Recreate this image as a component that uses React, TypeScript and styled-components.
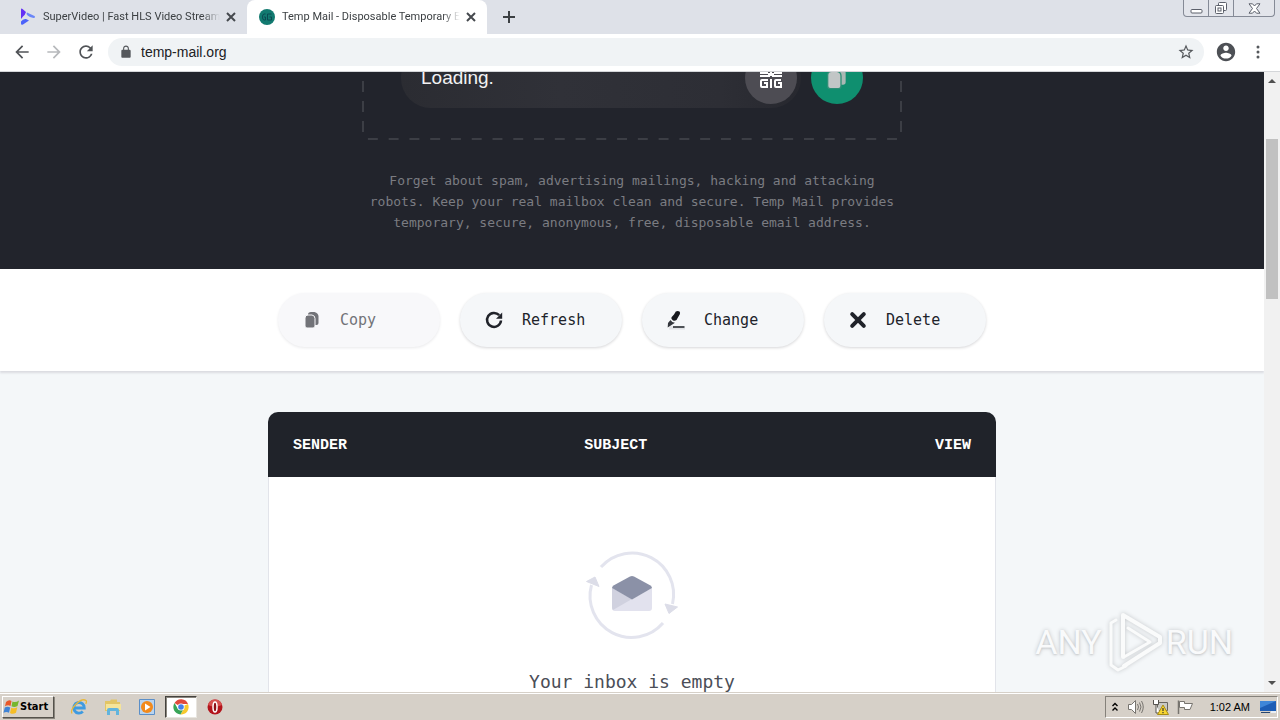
import React from "react";
import styled, { createGlobalStyle, css } from "styled-components";

const sans = `"Liberation Sans", Arial, sans-serif`;
const mono = `"DejaVu Sans Mono", "Liberation Mono", monospace`;
const headMono = `"Liberation Mono", "Courier New", monospace`;
const ui = `"DejaVu Sans Condensed", "DejaVu Sans", Tahoma, sans-serif`;

const GlobalStyle = createGlobalStyle`
  * { box-sizing: border-box; }
  body { margin: 0; font-family: ${sans}; color: #20232a; overflow: hidden; }
  button, input { font: inherit; color: inherit; border: 0; padding: 0; margin: 0; background: none; }
  svg { display: block; flex: none; }
`;

const Desktop = styled.div`
  height: 100vh;
  display: flex;
  flex-direction: column;
  overflow: hidden;
`;

/* ---------- browser chrome ---------- */

const TabStrip = styled.header`
  display: flex;
  align-items: center;
  height: 34px;
  flex: none;
  background: #dee1e8;
`;

const Tab = styled.div<{ $active?: boolean }>`
  display: flex;
  align-items: center;
  width: ${(p) => (p.$active ? 240 : 247)}px;
  height: 34px;
  padding: 0 10px 0 ${(p) => (p.$active ? 12 : 20)}px;
  border-radius: 8px 8px 0 0;
  background: ${(p) => (p.$active ? "#fff" : "transparent")};
`;

const TabTitle = styled.button`
  flex: 1;
  min-width: 0;
  margin: 0 5px 0 7px;
  overflow: hidden;
  white-space: nowrap;
  text-align: left;
  font: 11px/16px Roboto, ${sans};
  color: #3c4043;
  mask-image: linear-gradient(90deg, #000 90%, transparent);
`;

const IconButton = styled.button<{ $w?: number }>`
  display: flex;
  align-items: center;
  justify-content: center;
  flex: none;
  width: ${(p) => p.$w ?? 32}px;
  height: 28px;
`;

const CaptionButtons = styled.div`
  display: flex;
  align-self: flex-start;
  margin: 0 5px 0 auto;
  height: 17px;
  border: 1px solid #858a96;
  border-top: 0;
  border-radius: 0 0 4px 4px;
  background: #e3e5eb;
`;

const CaptionButton = styled.button<{ $w: number }>`
  display: flex;
  align-items: center;
  justify-content: center;
  width: ${(p) => p.$w}px;
  & + & { border-left: 1px solid #858a96; }
`;

const Toolbar = styled.nav`
  display: flex;
  align-items: center;
  height: 38px;
  flex: none;
  padding: 0 6px 2px;
  background: #fff;
  border-bottom: 1px solid #d4d6d9;
`;

const Omnibox = styled.div`
  display: flex;
  align-items: center;
  flex: 1;
  height: 28px;
  margin: 0 6px;
  padding: 0 2px 0 11px;
  border-radius: 14px;
  background: #f0f3f5;
`;

const UrlInput = styled.input`
  flex: 1;
  min-width: 0;
  margin-left: 8px;
  font: 14px/20px ${sans};
  color: #202124;
  outline: 0;
`;

/* ---------- page ---------- */

const View = styled.div`
  flex: 1;
  min-height: 0;
  display: flex;
  overflow: hidden;
`;

const Page = styled.main`
  flex: 1;
  min-width: 0;
  height: 100%;
  overflow: hidden;
  background: #f4f7f9;
`;

const Scrolled = styled.div`
  margin-top: -60px;
`;

const Hero = styled.section`
  display: flex;
  flex-direction: column;
  align-items: center;
  gap: 30px;
  padding: 6px 20px 36px;
  background: #22242c;
`;

const dash = "#3c3e45";
const MailFrame = styled.div`
  display: flex;
  align-items: center;
  gap: 10px;
  width: 100%;
  max-width: 540px;
  padding: 30px 39px 32px;
  background:
    linear-gradient(90deg, transparent 6px, ${dash} 6px 16px, transparent 16px) left bottom / 21px 2px round no-repeat,
    linear-gradient(transparent 1px, ${dash} 1px 12px, transparent 12px) left bottom / 2px 20px repeat-y,
    linear-gradient(transparent 1px, ${dash} 1px 12px, transparent 12px) right bottom / 2px 20px repeat-y;
`;

const MailPill = styled.div`
  display: flex;
  align-items: center;
  flex: 1;
  min-width: 0;
  height: 60px;
  padding: 4px 4px 4px 20px;
  border-radius: 30px;
  background: linear-gradient(90deg, #2b2c32, #303138 40%, #2d2e35 80%, #27282f);
`;

const MailInput = styled.input`
  flex: 1;
  min-width: 0;
  font: 19px/24px ${sans};
  color: #f2f2f3;
  outline: 0;
`;

const RoundButton = styled.button<{ $color: string }>`
  display: flex;
  align-items: center;
  justify-content: center;
  flex: none;
  width: 52px;
  height: 52px;
  border-radius: 50%;
  background: ${(p) => p.$color};
`;

const Intro = styled.p`
  max-width: 540px;
  margin: 0;
  text-align: center;
  font: 13px/21px ${mono};
  color: #7b7c82;
`;

const Actions = styled.section`
  display: flex;
  justify-content: center;
  gap: 20px;
  padding: 24px 20px;
  background: #fff;
  box-shadow: 0 2px 2px #dadbe0;
`;

const ActionButton = styled.button`
  display: flex;
  align-items: center;
  gap: 18px;
  width: 162px;
  height: 54px;
  padding: 0 24px;
  border-radius: 27px;
  background: #f5f7f9;
  box-shadow: 0 1px 3px #d6d6d8;
  font: 15px/20px ${mono};
  color: #20232a;
  &:disabled {
    background: #f8f8fa;
    box-shadow: 0 1px 3px #e9e9eb;
    color: #727378;
  }
`;

const Inbox = styled.section`
  max-width: 728px;
  margin: 41px auto 0;
  border-radius: 10px 10px 0 0;
  overflow: hidden;
`;

const InboxTable = styled.table`
  width: 100%;
  table-layout: fixed;
  border-collapse: separate;
  border-spacing: 0;
`;

const HeadCell = styled.th<{ $w: string; $end?: boolean }>`
  width: ${(p) => p.$w};
  height: 65px;
  padding: 2px 25px 0;
  text-align: ${(p) => (p.$end ? "right" : "left")};
  background: #20232a;
  color: #fff;
  font: bold 15px/20px ${headMono};
`;

const EmptyCell = styled.td`
  padding: 70px 20px 100px;
  background: #fff;
  border: 1px solid #e2e4ea;
  border-top: 0;
  text-align: center;
  svg { margin: 0 auto 27px; }
`;

const EmptyTitle = styled.h3`
  margin: 0;
  font: 18px/24px ${mono};
  color: #4b4e57;
`;

/* ---------- scrollbar ---------- */

const ScrollBar = styled.div`
  display: flex;
  flex-direction: column;
  align-items: center;
  width: 16px;
  flex: none;
  background: #f1f1f1;
`;

const ScrollTrack = styled.div`
  flex: 1;
  width: 12px;
  display: flex;
  flex-direction: column;
`;

const ScrollGap = styled.div<{ $grow: number }>`
  flex: ${(p) => p.$grow};
`;

const ScrollThumb = styled.div`
  flex: 160;
  background: #c1c1c1;
`;

/* ---------- watermark ---------- */

const Watermark = styled.div`
  position: absolute;
  right: 47px;
  bottom: 46px;
  display: flex;
  align-items: center;
  gap: 2px;
  font: 34px/60px Roboto, ${sans};
  color: #f9fafb;
  text-shadow: 0 0 4px #c3c6c9, 0 1px 2px #cdcfd1;
  pointer-events: none;
  svg { filter: drop-shadow(0 0 2px #c3c6c9); }
`;

/* ---------- taskbar ---------- */

const Taskbar = styled.footer`
  display: flex;
  align-items: center;
  height: 28px;
  flex: none;
  padding: 1px 2px 0;
  background: #d6d0c8;
  border-top: 1px solid #d6d0c8;
  box-shadow: inset 0 1px #fff;
  font: 11px/16px ${ui};
  color: #000;
`;

const bevel = css`
  border: 1px solid;
  border-color: #fff #55524c #55524c #fff;
  box-shadow: 1px 1px #8a867e;
`;

const StartButton = styled.button`
  display: flex;
  align-items: center;
  width: 52px;
  height: 22px;
  margin-right: 9px;
  font: bold 11px/16px ${ui};
  ${bevel}
`;

const TaskButton = styled.button<{ $active?: boolean }>`
  display: flex;
  align-items: center;
  justify-content: center;
  width: 32px;
  height: 22px;
  margin-right: 2px;
  ${(p) =>
    p.$active &&
    css`
      background: #fff;
      border: 1px solid;
      border-color: #44423e #e8e5df #e8e5df #44423e;
      box-shadow: inset 1px 1px #8a867e;
    `}
`;

const Tray = styled.div`
  display: flex;
  align-items: center;
  gap: 8px;
  height: 22px;
  margin-left: auto;
  padding: 0 1px 0 5px;
  border: 1px solid;
  border-color: #85817a #fff #fff #85817a;
`;

const Clock = styled.time`
  margin: 0 2px 0 8px;
  font: 11px/16px ${sans};
  white-space: nowrap;
`;

/* ---------- drawings ---------- */

const CloseX = () => (
  <svg width="10" height="10" viewBox="0 0 10 10" stroke="#45494e" strokeWidth="2">
    <path d="M1 1l8 8M9 1l-8 8" />
  </svg>
);

const SuperVideoLogo = () => (
  <svg width="16" height="18" viewBox="0 0 16 18">
    <path d="M1 1.5Q1 0 2.500 1L6 4Q5 7 3 8.500L1 11Z" fill="#6430f5" />
    <path d="M7 4.500L14.500 8Q16 9.500 13.500 10L10 9Q7.500 8 6.500 6Z" fill="#6a86f8" />
    <path d="M1 13.500Q3 10.500 6 11L9 12.500L3 16.500Q1 17.500 1 15.500Z" fill="#4c63fa" />
  </svg>
);

const TempMailLogo = () => (
  <svg width="16" height="16" viewBox="0 0 16 16">
    <circle cx="8" cy="8" r="8" fill="#127a70" />
    <path d="M6.500 5H5Q3.500 5 3.500 8T5 11h1.500V8H5M8.500 5v6h4V8h-2M8.500 5h4" fill="none" stroke="#0b4a52" />
  </svg>
);

const Arrow = ({ back }: { back?: boolean }) => (
  <svg width="20" height="20" viewBox="0 0 24 24" fill={back ? "#505357" : "#b7b9bc"}>
    <path d={back ? "M20 11H7.830l5.590-5.590L12 4l-8 8 8 8 1.410-1.410L7.830 13H20v-2z" : "M12 4l-1.410 1.410L16.170 11H4v2h12.170l-5.580 5.590L12 20l8-8z"} />
  </svg>
);

const ReloadIcon = () => (
  <svg width="20" height="20" viewBox="0 0 24 24" fill="#505357">
    <path d="M17.650 6.350A7.958 7.958 0 0 0 12 4c-4.420 0-7.990 3.580-7.990 8s3.570 8 7.990 8c3.730 0 6.840-2.550 7.730-6h-2.080A5.990 5.990 0 0 1 12 18c-3.310 0-6-2.690-6-6s2.690-6 6-6c1.660 0 3.140.690 4.220 1.780L13 11h7V4l-2.350 2.350z" />
  </svg>
);

const LockIcon = () => (
  <svg width="14" height="14" viewBox="0 0 24 24" fill="#55585c">
    <path d="M18 8h-1V6c0-2.760-2.240-5-5-5S7 3.240 7 6v2H6c-1.100 0-2 .9-2 2v10c0 1.100.9 2 2 2h12c1.100 0 2-.9 2-2V10c0-1.100-.9-2-2-2zM15.100 8H8.900V6c0-1.710 1.390-3.100 3.100-3.100s3.100 1.390 3.100 3.100v2z" />
  </svg>
);

const StarIcon = () => (
  <svg width="18" height="18" viewBox="0 0 24 24" fill="#55585c">
    <path d="M22 9.240l-7.190-.620L12 2 9.190 8.630 2 9.240l5.460 4.730L5.820 21 12 17.270 18.180 21l-1.630-7.030L22 9.240zM12 15.400l-3.760 2.270 1-4.280-3.320-2.880 4.380-.380L12 6.100l1.710 4.040 4.380.380-3.320 2.880 1 4.280L12 15.400z" />
  </svg>
);

const ProfileIcon = () => (
  <svg width="22" height="22" viewBox="0 0 24 24" fill="#4d5055">
    <path d="M12 2C6.480 2 2 6.480 2 12s4.480 10 10 10 10-4.480 10-10S17.520 2 12 2zm0 3c1.660 0 3 1.340 3 3s-1.340 3-3 3-3-1.340-3-3 1.340-3 3-3zm0 14.200c-2.500 0-4.710-1.280-6-3.220.030-1.990 4-3.080 6-3.080 1.990 0 5.970 1.090 6 3.080-1.290 1.940-3.500 3.220-6 3.220z" />
  </svg>
);

const MenuDots = () => (
  <svg width="4" height="14" viewBox="0 0 4 14" fill="#55585c">
    <circle cx="2" cy="2" r="1.500" />
    <circle cx="2" cy="7" r="1.500" />
    <circle cx="2" cy="12" r="1.500" />
  </svg>
);

const QrIcon = () => (
  <svg width="24" height="24" viewBox="0 0 24 24" fill="none" stroke="#fff" strokeWidth="2">
    <path d="M2 2h6v5H2zM16 2h6v5h-6zM12 1v6M1 10h9V7M12 10v-3M14 7v3h9" />
    <path d="M9 14H3q-1 0-1 1v5q0 1 1 1h5v-4H5M12 13v9M22 14h-5q-1 0-1 1v5q0 1 1 1h5v-4h-3" />
  </svg>
);

const CopyIcon = ({ color, back, edge, large }: { color: string; back: string; edge: string; large?: boolean }) => (
  <svg width={large ? 24 : 20} height={large ? 24 : 20} viewBox={large ? "0 0 18 18" : "-1 -1 20 20"}>
    <path d="M5 3.500Q5 1 8 1h3.500Q15.500 2 15.500 5.500V12q0 2-2 2H5z" fill={back} />
    <path d="M2 7q0-3 3-3h4q3 .5 3 3.500v7.500q0 2-2 2H4q-2 0-2-2z" fill={color} stroke={edge} />
  </svg>
);

const RefreshIcon = () => (
  <svg width="20" height="20" viewBox="0 0 20 20">
    <path d="M15.200 5.200A7 7 0 1 0 17 10.500" fill="none" stroke="#20232a" strokeWidth="2.500" />
    <path d="M18.200 2.500v6.200H12z" fill="#20232a" />
  </svg>
);

const ChangeIcon = () => (
  <svg width="20" height="20" viewBox="0 0 20 20">
    <path d="M4 15l6 3h9v1.500H3z" fill="#e0e2e5" />
    <path d="M8 4.500l1.800-3q2-1.200 3.700 0 1 1.300.3 2.800L10.500 10q-1.700 1.300-3.800.2-1.900-1.200-1.200-2.900z" fill="#17191e" />
    <path d="M4.500 10q1.500 2.800 4.500 2.700L1.700 17.500 2 13z" fill="#33363c" />
    <path d="M7 17h11.500" stroke="#3c3f45" strokeWidth="1.800" />
  </svg>
);

const DeleteIcon = () => (
  <svg width="20" height="20" viewBox="0 0 20 20" stroke="#20232a" strokeWidth="4" strokeLinecap="round">
    <path d="M4.200 4.200l11.600 11.600M15.800 4.200L4.200 15.800" />
  </svg>
);

const EmptyInboxArt = () => (
  <svg width="94" height="96" viewBox="0 0 94 96">
    <g fill="none" stroke="#e3e4ee" strokeWidth="3">
      <path d="M16 20A41.500 41.500 0 0 1 87.500 57" />
      <path d="M78 76A41.500 41.500 0 0 1 6.500 38" />
    </g>
    <path d="M1.500 34.500L10 30l4 9.500zM80 57l12.500 3-8.500 6.500z" fill="#dcdde8" stroke="#dcdde8" strokeLinejoin="round" />
    <path d="M27 41L47 52 67 41v20q0 3-3 3H30q-3 0-3-3z" fill="#e2e2ee" />
    <path d="M27 41L47 52 28 63q-1-1-1-3z" fill="#d0d1df" />
    <path d="M27 41Q27 39.500 28.500 38.500L45 29.500q2-1 4 0L65.500 38.500Q67 39.500 67 41L47 52.500z" fill="#8b91a7" />
  </svg>
);

const PlayMark = () => (
  <svg width="60" height="64" viewBox="0 0 60 64" fill="none" stroke="#fafbfb" strokeWidth="4" strokeLinejoin="round" strokeLinecap="round">
    <path d="M19 47V5l37 22v6L20 56" />
    <path d="M12 10l-5 3v42l7 5 8-4M20 47l26-15-22-14" strokeWidth="3" />
  </svg>
);

const WindowsFlag = () => (
  <svg width="17" height="16" viewBox="0 0 17 16">
    <path d="M3 3q3-3 5.500-1L7.500 7q-2.500-1.500-5.500.3z" fill="#e8582a" />
    <path d="M9.500 2.500q3 1.500 6.500-1L14.500 7q-3 1.800-6 .3z" fill="#76b62f" />
    <path d="M1.800 8.500q2.700-1.700 5.400 0L6 13.800q-2.500-1.800-5.500 0z" fill="#3f83d6" />
    <path d="M8.300 8.700q3 1.300 6-.4L13 13.800q-3 2-6 .2z" fill="#f5bd26" />
  </svg>
);

const ExplorerIcon = () => (
  <svg width="18" height="18" viewBox="0 0 18 18" fill="none">
    <path d="M4 10h10.300a5.300 5.300 0 1 0-1.500 3.500" stroke="#3f9be0" strokeWidth="2.800" />
    <path d="M2 15.500C-.5 11 11-1 16 2.500q1 1.200-.3 3.300" stroke="#e8b83a" strokeWidth="1.300" />
  </svg>
);

const FolderIcon = () => (
  <svg width="18" height="18" viewBox="0 0 18 18">
    <path d="M1 3h5l1-1.500h6V4h3v9H1z" fill="#e2c566" />
    <path d="M2 6h15v6H2z" fill="#f5e49a" />
    <path d="M3 17v-5q0-2 2-2h8q2 0 2 2v5h-3v-4H6v4z" fill="#62b4dd" />
  </svg>
);

const PlayerIcon = () => (
  <svg width="18" height="18" viewBox="0 0 18 18">
    <path d="M1.500 1.500h15v15h-15z" fill="#b9d4ef" stroke="#5b8fc8" />
    <circle cx="9" cy="9" r="6" fill="#f28a1c" />
    <path d="M7 5.500l5.500 3.500L7 12.500z" fill="#fff" />
  </svg>
);

const ChromeIcon = () => (
  <svg width="16" height="16" viewBox="0 0 16 16">
    <path d="M8 8L1.500 4A7.500 7.500 0 0 1 15 5H8z" fill="#e04a3c" />
    <path d="M8 8L15 5A7.500 7.500 0 0 1 7.500 15.500L11 9.500z" fill="#f7c92d" />
    <path d="M8 8l2.500 2-3 5.500A7.500 7.500 0 0 1 1.500 4l3.500 6z" fill="#38a457" />
    <circle cx="8" cy="8" r="3.600" fill="#fff" />
    <circle cx="8" cy="8" r="2.800" fill="#4380ea" />
  </svg>
);

const OperaIcon = () => (
  <svg width="16" height="16" viewBox="0 0 16 16">
    <circle cx="8" cy="8" r="7.500" fill="#b3141c" />
    <path d="M1 6a7.200 7.200 0 0 1 14 0Q8 9 1 6z" fill="#d6504f" />
    <ellipse cx="8" cy="8" rx="2" ry="5" fill="#8e1016" stroke="#fff" strokeWidth="1.500" />
  </svg>
);

const ChevronsUp = () => (
  <svg width="8" height="10" viewBox="0 0 8 10" fill="none" stroke="#000" strokeWidth="1.400">
    <path d="M1.500 4L4 1.500 6.500 4M1.500 8.500L4 6l2.500 2.500" />
  </svg>
);

const SpeakerIcon = () => (
  <svg width="17" height="16" viewBox="0 0 17 16" fill="none" stroke="#77746f">
    <path d="M1.500 5.500h3L8.500 1.500v13l-4-4h-3z" fill="#fff" />
    <path d="M10.500 5q2 3 0 6M12.500 3.500q3 4.500 0 9M14.500 2q3.500 6 0 12" />
  </svg>
);

const NetworkIcon = () => (
  <svg width="17" height="16" viewBox="0 0 17 16">
    <path d="M5.500 3.500h10v8h-10z" fill="#c9c9c4" stroke="#67645f" />
    <path d="M1.500 1v4.500h5V1M4 5.500V14h4" fill="#fff" stroke="#55524e" />
    <path d="M11 6l5.500 9.500h-11z" fill="#f7d531" stroke="#a98c12" />
    <path d="M11 9v3M11 13v1.200" stroke="#333" strokeWidth="1.200" />
  </svg>
);

const FlagIcon = () => (
  <svg width="17" height="16" viewBox="0 0 17 16">
    <path d="M1.500 15V1.500" stroke="#77746f" strokeWidth="1.500" />
    <path d="M2.500 2.500h5v2h8l-2.500 6H7.500v-2h-5z" fill="#fff" stroke="#77746f" />
  </svg>
);

const DesktopIcon = () => (
  <svg width="16" height="14" viewBox="0 0 16 14">
    <path d="M0 1h16v10H0z" fill="#1d5db5" />
    <path d="M0 1h16L0 8z" fill="#3f86d8" />
    <path d="M1 12h9v1H1z" fill="#26456f" />
    <path d="M11 11h5v2h-5z" fill="#e9eef5" />
  </svg>
);

const ScrollArrow = ({ down }: { down?: boolean }) => (
  <svg width="16" height="17" viewBox="0 0 16 17" fill="#505050">
    <path d={down ? "M4 6h8l-4 4z" : "M4 11h8L8 7z"} />
  </svg>
);

export default function App() {
  return (
    <Desktop>
      <GlobalStyle />
      <TabStrip>
        <Tab>
          <SuperVideoLogo />
          <TabTitle>SuperVideo | Fast HLS Video Streami</TabTitle>
          <IconButton $w={12} aria-label="Close tab"><CloseX /></IconButton>
        </Tab>
        <Tab $active>
          <TempMailLogo />
          <TabTitle>Temp Mail - Disposable Temporary Er</TabTitle>
          <IconButton $w={12} aria-label="Close tab"><CloseX /></IconButton>
        </Tab>
        <IconButton $w={44} aria-label="New tab">
          <svg width="12" height="12" viewBox="0 0 12 12" stroke="#3c4043" strokeWidth="2">
            <path d="M6 0v12M0 6h12" />
          </svg>
        </IconButton>
        <CaptionButtons>
          <CaptionButton $w={24} aria-label="Minimize">
            <svg width="13" height="11" viewBox="0 0 13 11" fill="#fff" stroke="#5c606b">
              <rect x="1" y="6.500" width="11" height="3.500" rx="1" />
            </svg>
          </CaptionButton>
          <CaptionButton $w={25} aria-label="Restore">
            <svg width="14" height="14" viewBox="0 0 14 14" fill="#fff" stroke="#5c606b">
              <rect x="4.500" y="1.500" width="8" height="8" rx="1" />
              <rect x="1.500" y="4.500" width="8" height="8" rx="1" />
              <rect x="4" y="7" width="3" height="3" />
            </svg>
          </CaptionButton>
          <CaptionButton $w={41} aria-label="Close">
            <svg width="13" height="11" viewBox="0 0 13 11" fill="#fff" stroke="#5c606b">
              <path d="M1 .8h3.500l2 2.200 2-2.200H12L8.500 5.500 12 10.200H8.500l-2-2.200-2 2.200H1L4.500 5.500z" />
            </svg>
          </CaptionButton>
        </CaptionButtons>
      </TabStrip>
      <Toolbar>
        <IconButton aria-label="Back"><Arrow back /></IconButton>
        <IconButton aria-label="Forward"><Arrow /></IconButton>
        <IconButton aria-label="Reload"><ReloadIcon /></IconButton>
        <Omnibox>
          <LockIcon />
          <UrlInput aria-label="Address" defaultValue="temp-mail.org" />
          <IconButton aria-label="Bookmark"><StarIcon /></IconButton>
        </Omnibox>
        <IconButton aria-label="Profile"><ProfileIcon /></IconButton>
        <IconButton aria-label="Menu"><MenuDots /></IconButton>
      </Toolbar>

      <View>
        <Page>
          <Scrolled>
            <Hero>
              <MailFrame>
                <MailPill>
                  <MailInput aria-label="Temporary email address" defaultValue="Loading." />
                  <RoundButton $color="#4d4c53" aria-label="QR code"><QrIcon /></RoundButton>
                </MailPill>
                <RoundButton $color="#0f8f6f" aria-label="Copy address">
                  <CopyIcon large color="#c2c6c6" back="#a9b8b4" edge="#2f8f76" />
                </RoundButton>
              </MailFrame>
              <Intro>
                Forget about spam, advertising mailings, hacking and attacking robots. Keep your real
                mailbox clean and secure. Temp Mail provides temporary, secure, anonymous, free,
                disposable email address.
              </Intro>
            </Hero>
            <Actions>
              <ActionButton disabled>
                <CopyIcon color="#727378" back="#727378" edge="#f8f8fa" />
                Copy
              </ActionButton>
              <ActionButton><RefreshIcon />Refresh</ActionButton>
              <ActionButton><ChangeIcon />Change</ActionButton>
              <ActionButton><DeleteIcon />Delete</ActionButton>
            </Actions>
            <Inbox>
              <InboxTable>
                <thead>
                  <tr>
                    <HeadCell $w="40%">SENDER</HeadCell>
                    <HeadCell $w="40%">SUBJECT</HeadCell>
                    <HeadCell $w="20%" $end>VIEW</HeadCell>
                  </tr>
                </thead>
                <tbody>
                  <tr>
                    <EmptyCell colSpan={3}>
                      <EmptyInboxArt />
                      <EmptyTitle>Your inbox is empty</EmptyTitle>
                    </EmptyCell>
                  </tr>
                </tbody>
              </InboxTable>
            </Inbox>
          </Scrolled>
        </Page>
        <ScrollBar>
          <ScrollArrow />
          <ScrollTrack>
            <ScrollGap $grow={50} />
            <ScrollThumb />
            <ScrollGap $grow={376} />
          </ScrollTrack>
          <ScrollArrow down />
        </ScrollBar>
      </View>

      <Watermark>
        <span>ANY</span>
        <PlayMark />
        <span>RUN</span>
      </Watermark>

      <Taskbar>
        <StartButton><WindowsFlag />Start</StartButton>
        <TaskButton aria-label="Internet Explorer"><ExplorerIcon /></TaskButton>
        <TaskButton aria-label="Files"><FolderIcon /></TaskButton>
        <TaskButton aria-label="Media player"><PlayerIcon /></TaskButton>
        <TaskButton $active aria-label="Chrome"><ChromeIcon /></TaskButton>
        <TaskButton aria-label="Opera"><OperaIcon /></TaskButton>
        <Tray>
          <ChevronsUp />
          <SpeakerIcon />
          <NetworkIcon />
          <FlagIcon />
          <Clock>1:02 AM</Clock>
          <DesktopIcon />
        </Tray>
      </Taskbar>
    </Desktop>
  );
}
